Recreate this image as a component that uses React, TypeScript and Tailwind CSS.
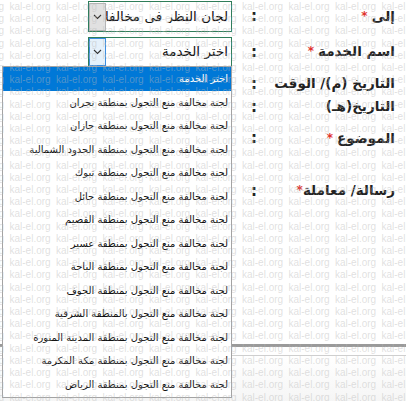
import React from 'react';

const regions = [
  'نجران',
  'جازان',
  'الحدود الشمالية',
  'تبوك',
  'حائل',
  'القصيم',
  'عسير',
  'الباحة',
  'الجوف',
  'الشرقية',
  'المدينة المنورة',
  'مكة المكرمة',
  'الرياض',
];

function Chevron() {
  return (
    <svg width="9" height="6" viewBox="0 0 9 6" fill="none">
      <path d="M1 1l3.5 3.5L8 1" stroke="#333" strokeWidth="1.1" />
    </svg>
  );
}

function Label({ text, req, gap = true }: { text: string; req?: boolean; gap?: boolean }) {
  return (
    <div className="w-[134px] shrink-0 text-[13.5px] font-bold text-[#222] whitespace-nowrap leading-none">
      {text}
      {req && <span className={`text-[#e0322b] text-[12px] align-top ${gap ? 'mr-[4px]' : ''}`}>*</span>}
    </div>
  );
}

function Colon() {
  return <div className="w-[14px] shrink-0 text-center text-[15px] font-bold leading-none text-[#222]">:</div>;
}

function Select({ value, hover }: { value: string; hover?: boolean }) {
  return (
    <div className="mr-[15px] w-[144px] h-full border border-[#2f7d59] flex items-center bg-white overflow-hidden">
      <div className="flex-1 min-w-0 overflow-hidden whitespace-nowrap pr-[3px] text-[13.5px] text-[#111] leading-none">
        {value}
      </div>
      <div
        className={`w-[17px] h-[28px] shrink-0 flex items-center justify-center border ${
          hover ? 'bg-[#e5f1fb] border-[#3d8ee0]' : 'bg-[#e1e1e1] border-[#b5b5b5]'
        }`}
      >
        <Chevron />
      </div>
    </div>
  );
}

export default function App() {
  // faint site watermark laid over the page
  const rows = Array.from({ length: 34 });
  const cols = Array.from({ length: 10 });

  return (
    <div
      dir="rtl"
      className="relative w-[406px] h-[401px] overflow-hidden bg-white"
      style={{ fontFamily: '"DejaVu Sans", Tahoma, sans-serif' }}
    >
      {/* form */}
      <div className="flex flex-col pr-[11px] pt-[1px]">
        <div className="flex items-center h-[31px]">
          <Label text="إلى" req />
          <Colon />
          <Select value="لجان النظر في مخالفات منع التجول" />
        </div>
        <div className="flex items-center h-[30px] mt-[5px]">
          <Label text="اسم الخدمة" req />
          <Colon />
          <Select value="اختر الخدمة" hover />
        </div>
        <div className="flex items-center h-[20px] mt-[7px]">
          <Label text="التاريخ (م)/ الوقت" />
          <Colon />
        </div>
        <div className="flex items-center h-[20px] mt-[3px]">
          <Label text="التاريخ(هـ)" />
          <Colon />
        </div>
        <div className="flex items-center h-[27px] mt-[8px]">
          <Label text="الموضوع" req />
          <Colon />
          <div className="mr-[15px] w-[144px] h-full border border-[#22a36c]" />
        </div>
        <div className="flex items-start h-[170px] mt-[11px]">
          <div className="pt-[21px] flex">
            <Label text="رسالة/ معاملة" req gap={false} />
            <Colon />
          </div>
          <div className="mr-[15px] w-[144px] h-full border border-[#2f7d59]" />
        </div>
        <div className="-mr-[11px] mt-[11px] h-[3px] bg-[#9a9a9a]" />
        <div className="-mr-[11px] mt-[8px] h-[1px] bg-[#cfcfcf]" />
        <div className="-mr-[11px] h-[60px] bg-gradient-to-b from-white to-[#f2f2f2]" />
      </div>

      {/* open service list */}
      <div className="absolute left-[2px] top-[66px] w-[230px] h-[332px] border border-[#a3a3a3] bg-white text-[10px] leading-none">
        <div className="h-[24px] bg-[#0078d7] text-white flex items-center pr-[3px]">اختر الخدمة</div>
        {regions.map(r => (
          <div key={r} className="h-[23.5px] flex items-center pr-[3px] text-[#111] whitespace-nowrap">
            {`لجنة مخالفة منع التجول ${r === 'الشرقية' ? 'بالمنطقة' : 'بمنطقة'} ${r}`}
          </div>
        ))}
      </div>

      {/* watermark */}
      <div
        dir="ltr"
        className="pointer-events-none absolute left-[-37px] top-[1px] flex flex-col text-[10px] leading-[12.2px] text-[rgba(185,185,185,0.45)]"
        style={{ fontFamily: '"Liberation Sans", Arial, sans-serif' }}
      >
        {rows.map((_, i) => (
          <div key={i} className="flex whitespace-nowrap">
            {cols.map((_, j) => (
              <span key={j} className="w-[46.5px] shrink-0">kal-el.org</span>
            ))}
          </div>
        ))}
      </div>
    </div>
  );
}
